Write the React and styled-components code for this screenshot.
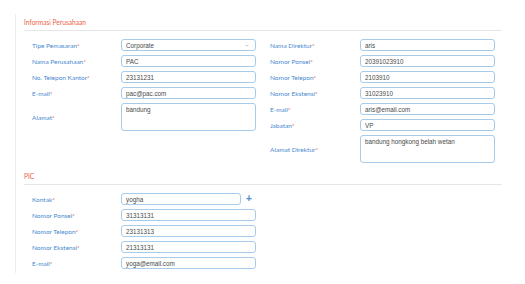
import React from 'react';
import styled, { createGlobalStyle } from 'styled-components';

const GlobalStyle = createGlobalStyle`
  body {
    margin: 0;
    background: #ffffff;
    font-family: Lato, "Noto Sans", sans-serif;
  }
`;

const Page = styled.div`
  padding: 14px 0 0 15px;
`;

const Card = styled.div`
  width: 487px;
  border-left: 1px solid #ededed;
  padding: 0 0 4px 8px;
  box-sizing: border-box;
`;

const Section = styled.section`
  margin-top: ${({ $spaced }) => ($spaced ? '5px' : '0')};
`;

const SectionTitle = styled.h3`
  margin: 0;
  height: 16px;
  line-height: 16px;
  font-size: 6.6px;
  font-weight: 400;
  color: #ec6148;
  border-bottom: 1px solid #e6e6e6;
`;

const Columns = styled.div`
  display: flex;
  gap: 14px;
  padding: 8px 0 0 8px;
`;

const Column = styled.div`
  display: flex;
  flex-direction: column;
  gap: 4px;
  width: ${({ $width }) => $width}px;
`;

const Row = styled.div`
  display: flex;
  align-items: center;
`;

const Label = styled.label`
  width: ${({ $width }) => $width || 89}px;
  flex-shrink: 0;
  font-size: 6.5px;
  color: #4a8ad0;

  &::after {
    content: '*';
    color: #ea5a3f;
  }
`;

const Field = styled.div`
  position: relative;
  width: ${({ $width }) => $width || 135}px;
  height: ${({ $tall }) => ($tall ? 28 : 12)}px;
  box-sizing: border-box;
  border: 1px solid #a9cbea;
  border-radius: 3px;
  padding: ${({ $tall }) => ($tall ? '2px 4px' : '0 4px')};
  display: flex;
  align-items: ${({ $tall }) => ($tall ? 'flex-start' : 'center')};
  font-family: "Liberation Sans", Arial, sans-serif;
  font-size: 6.3px;
  color: #4a4a4a;
  background: #ffffff;
`;

const Chevron = styled.svg`
  position: absolute;
  right: 6px;
  top: 4px;
`;

const AddButton = styled.span`
  margin-left: 5px;
  font-family: "Liberation Sans", Arial, sans-serif;
  font-size: 10px;
  font-weight: 700;
  line-height: 12px;
  color: #4a8ad0;
`;

const FormRow = ({ label, value, tall, select, width, labelWidth, children }) => (
  <Row>
    <Label $width={labelWidth}>{label}</Label>
    <Field $tall={tall} $width={width}>
      {value}
      {select && (
        <Chevron width="4" height="3" viewBox="0 0 4 3">
          <path d="M0.5 0.7 L2 2.2 L3.5 0.7" fill="none" stroke="#9a9a9a" strokeWidth="0.6" />
        </Chevron>
      )}
    </Field>
    {children}
  </Row>
);

const companyLeft = [
  { label: 'Tipe Pemasaran', value: 'Corporate', select: true },
  { label: 'Nama Perusahaan', value: 'PAC' },
  { label: 'No. Telepon Kantor', value: '23131231' },
  { label: 'E-mail', value: 'pac@pac.com' },
  { label: 'Alamat', value: 'bandung', tall: true },
];

const companyRight = [
  { label: 'Nama Direktur', value: 'aris' },
  { label: 'Nomor Ponsel', value: '20391023910' },
  { label: 'Nomor Telepon', value: '2103910' },
  { label: 'Nomor Ekstensi', value: '31023910' },
  { label: 'E-mail', value: 'aris@email.com' },
  { label: 'Jabatan', value: 'VP' },
  { label: 'Alamat Direktur', value: 'bandung hongkong belah wetan', tall: true },
];

const pic = [
  { label: 'Nomor Ponsel', value: '31313131' },
  { label: 'Nomor Telepon', value: '23131313' },
  { label: 'Nomor Ekstensi', value: '21313131' },
  { label: 'E-mail', value: 'yoga@email.com' },
];

const App = () => (
  <Page>
    <GlobalStyle />
    <Card>
      <Section>
        <SectionTitle>Informasi Perusahaan</SectionTitle>
        <Columns>
          <Column $width={224}>
            {companyLeft.map((f) => (
              <FormRow key={f.label} {...f} />
            ))}
          </Column>
          <Column $width={225}>
            {companyRight.map((f) => (
              <FormRow key={f.label} labelWidth={90} {...f} />
            ))}
          </Column>
        </Columns>
      </Section>
      <Section $spaced>
        <SectionTitle>PIC</SectionTitle>
        <Columns>
          <Column $width={240}>
            <FormRow label="Kontak" value="yogha" width={120}>
              <AddButton>+</AddButton>
            </FormRow>
            {pic.map((f) => (
              <FormRow key={f.label} {...f} />
            ))}
          </Column>
        </Columns>
      </Section>
    </Card>
  </Page>
);

export default App;
